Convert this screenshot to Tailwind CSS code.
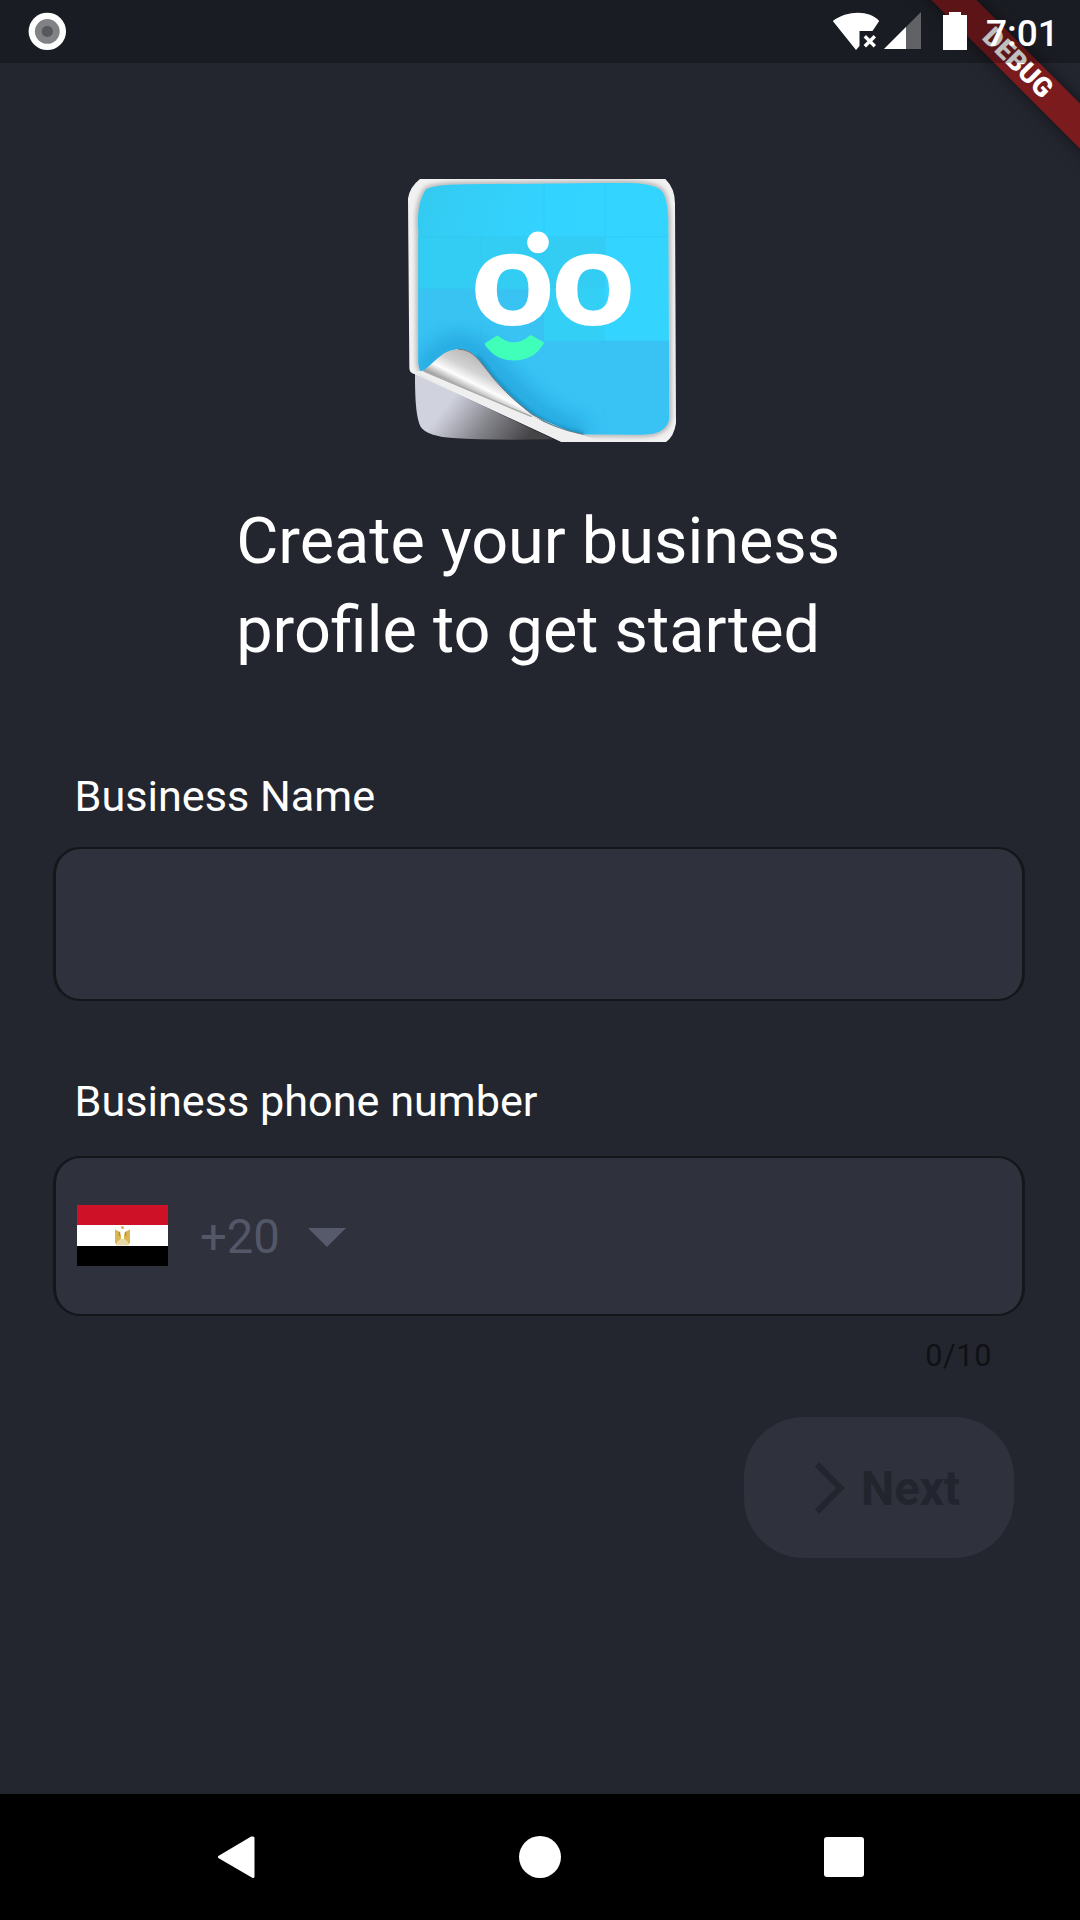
<!DOCTYPE html>
<html lang="en">
<head>
<meta charset="utf-8">
<title>Create your business profile</title>
<script src="https://cdn.jsdelivr.net/npm/@tailwindcss/browser@4"></script>
</head>
<body class="bg-[#23262f]">
<div class="relative flex h-[1920px] w-[1080px] flex-col overflow-hidden bg-[#23262f] font-['Roboto',sans-serif] text-white">

  <!-- Debug ribbon, painted under the translucent status bar -->
  <div class="absolute top-0 right-0 h-[260px] w-[280px] overflow-hidden">
    <div class="absolute top-[46.500px] left-[16.800px] flex h-[31.5px] w-[400px] rotate-45 items-center justify-center bg-[#7b1b1e] text-[27px] leading-none font-black shadow-[0_0_16px_rgba(0,0,0,0.5)]"><span class="pl-[1px]">DEBUG</span></div>
  </div>

  <!-- Status bar -->
  <header class="relative flex h-[63px] shrink-0 items-start bg-black/25">
    <svg class="mt-[12px] ml-[28px] size-[39px]" viewBox="0 0 39 39">
      <circle cx="19.3" cy="19.4" r="18.7" fill="#fff"/>
      <circle cx="19.3" cy="19.4" r="12.4" fill="#808285"/>
      <circle cx="19.3" cy="19.4" r="5.6" fill="#56585c"/>
    </svg>
    <svg class="ml-[758px] h-[63px] w-[153px]" viewBox="0 0 153 63">
      <path d="M7.800 21C22 10 45 10 54.200 21L47.500 31H34.500V46L31 50Z" fill="#fff"/>
      <path d="M39.800 36.300L49.800 46.300M49.800 36.300L39.800 46.300" stroke="#fff" stroke-width="3.400"/>
      <path d="M96 12V49H59Z" fill="#606266"/>
      <path d="M81 27V49H59Z" fill="#fff"/>
      <path d="M124 12H136V15H142V50H118V15H124Z" fill="#fff"/>
    </svg>
    <span class="mt-[12px] ml-[8px] text-[37px] leading-[43px] font-medium">7:01</span>
  </header>

  <main class="relative flex grow flex-col items-start">
    <svg class="mt-[97px] ml-[390px] size-[300px]" viewBox="0 0 900 900">
      <defs>
        <linearGradient id="sky" x1="0" y1="0" x2="1" y2="0.2"><stop offset="0" stop-color="#34caf0"/><stop offset="0.5" stop-color="#33d3ff"/><stop offset="1" stop-color="#33d5ff"/></linearGradient>
        <linearGradient id="under" gradientUnits="userSpaceOnUse" x1="150" y1="760" x2="350" y2="915"><stop offset="0" stop-color="#d0d3de"/><stop offset="0.12" stop-color="#c0c1cd"/><stop offset="0.5" stop-color="#85858c"/><stop offset="1" stop-color="#454548"/></linearGradient>
        <linearGradient id="curl" gradientUnits="userSpaceOnUse" x1="265" y1="580" x2="205" y2="700"><stop offset="0" stop-color="#b5b5b5"/><stop offset="0.4" stop-color="#d2d2d2"/><stop offset="0.65" stop-color="#fdfdfd"/><stop offset="0.85" stop-color="#a8a8a8"/><stop offset="1" stop-color="#888"/></linearGradient>
        <clipPath id="face"><path d="M105 92Q115 74 230 73L700 68Q790 68 815 92Q833 115 835 180L838 770Q836 822 755 824L570 823C460 805 400 750 310 655C270 605 250 568 200 568C165 572 130 615 95 635Q86 632 85 600V215Q78 135 105 92Z"/></clipPath>
        <filter id="soft" x="-20%" y="-20%" width="140%" height="140%"><feGaussianBlur stdDeviation="7"/></filter>
        <filter id="softer" x="-30%" y="-30%" width="160%" height="160%"><feGaussianBlur stdDeviation="28"/></filter>
        <clipPath id="sheet"><path d="M90 57H826Q855 85 855 130L858 790Q852 830 828 846H515L75 643Q59 640 58 625L54 115Q60 80 90 57Z"/></clipPath>
      </defs>
      <path d="M75 640L490 838Q300 842 190 834Q110 828 92 800Q74 770 75 640Z" fill="url(#under)"/>
      <g clip-path="url(#sheet)">
        <rect x="50" y="50" width="820" height="800" fill="#f1f1f1"/>
        <path d="M105 92Q115 74 230 73L700 68Q790 68 815 92Q833 115 835 180L838 770Q836 822 755 824L570 823L95 635Q86 632 85 600V215Q78 135 105 92Z" fill="none" stroke="#aaa" stroke-width="12" filter="url(#soft)"/>
      </g>
      <g clip-path="url(#face)">
        <rect x="70" y="60" width="780" height="780" fill="url(#sky)"/>
        <rect x="70" y="232" width="575" height="154" fill="#33ccf2"/>
        <rect x="462" y="386" width="182" height="156" fill="#33cff5"/>
        <rect x="70" y="386" width="392" height="160" fill="#38c3f3"/>
        <rect x="70" y="542" width="780" height="300" fill="#39c3f5"/>
        <path d="M273 232V542M462 70V232M645 70V386M645 542V830M85 230H835" stroke="#2fc3ef" stroke-width="2" fill="none" opacity="0.6"/>
        <path d="M85 650C120 600 150 560 200 555C270 555 300 610 340 650C410 720 470 790 590 815" fill="none" stroke="#1590cb" stroke-width="60" opacity="0.55" filter="url(#softer)"/>
        <path d="M260 590C290 625 300 645 320 665C400 750 460 805 580 823" fill="none" stroke="#1479a8" stroke-width="10" filter="url(#soft)"/>
      </g>
      <path d="M95 635C130 615 155 568 205 568C250 568 270 605 310 655C340 690 380 728 425 765L540 815Z" fill="url(#curl)"/>
      <path d="M205 568C250 568 270 605 310 655C370 725 460 805 580 823" fill="none" stroke="#777" stroke-width="3"/>
      <path d="M75 636L100 632L425 768Q500 808 570 823L640 846H515Z" fill="#efefef"/>
      <path d="M100 633L425 770" stroke="#a5a5a5" stroke-width="4"/>
      <circle cx="444" cy="247" r="32.500" fill="#fff"/>
      <text transform="translate(237 494) scale(1.104 1)" font-family="Open Sans" font-weight="700" font-size="384" letter-spacing="-19" fill="#fff">oo</text>
      <path d="M288 552L322 530Q371 572 422 529L458 549Q430 598 372 598Q318 598 288 552Z" fill="#40ffb8" stroke="#40ffb8" stroke-width="7" stroke-linejoin="round"/>
    </svg>

    <h1 class="mt-[37px] ml-[236.200px] text-[64.8px] leading-[89px] whitespace-nowrap">Create your business<br>profile to get started</h1>

    <label class="mt-[97px] ml-[74.500px] text-[43.2px] leading-[49px]">Business Name</label>
    <div class="mt-[26px] ml-[53px] h-[154px] w-[972px] rounded-[27px] border-x-3 border-y-2 border-[#14161a] bg-[#2f313c]"></div>

    <label class="mt-[76px] ml-[74.500px] text-[43.2px] leading-[49px]">Business phone number</label>
    <div class="mt-[30px] ml-[53px] flex h-[160px] w-[972px] items-center rounded-[27px] border-x-3 border-y-2 border-[#14161a] bg-[#2f313c] pb-[2px] pl-[21px]">
      <svg class="h-[61px] w-[91px]" viewBox="0 0 91 61">
        <rect width="91" height="61" fill="#fff"/>
        <rect width="91" height="20" fill="#ce1126"/>
        <rect y="41" width="91" height="20" fill="#000"/>
        <path d="M38 24.500L42.500 26.500L44 31L44 37L40 39.500L38 38ZM53 24.500L48.500 26.500L47 31V37L51 39.500L53 38Z" fill="#d9b651"/>
        <path d="M43.500 21.500H47L46.500 24H45Z" fill="#cfa93c"/>
        <path d="M40 37L43.500 34H47.500L51 37L52 40.500H39Z" fill="#ead9a8"/>
        <path d="M42.500 27V31M48.500 27V31" stroke="#b98a1e" stroke-width="1.400"/>
      </svg>
      <span class="relative top-[2px] ml-[32px] text-[47.250px] leading-[55px] text-[#535767]">+20</span>
      <svg class="relative top-[2px] ml-[28px] h-[19px] w-[38px]" viewBox="0 0 38 19"><path d="M0 0H38L19 19Z" fill="#565a6a"/></svg>
    </div>
    <div class="mt-[21px] mr-[88px] self-end text-[30.700px] leading-[37px] tracking-[0.600px] text-[#101115]">0/10</div>

    <button class="mt-[43px] mr-[66px] flex h-[141px] w-[270px] items-center self-end rounded-[60px] bg-[#2f313c] pl-[70px] text-[#22252e]">
      <svg class="h-[52px] w-[32px]" viewBox="0 0 32 52" fill="none" stroke="currentColor" stroke-width="6.200"><path d="M3 2.500L26.500 26L3 49.500"/></svg>
      <span class="mt-[3px] ml-[15px] text-[47.250px] leading-[55px] font-bold">Next</span>
    </button>
  </main>

  <!-- Navigation bar -->
  <nav class="flex h-[126px] shrink-0 items-center bg-black">
    <svg class="ml-[217px] h-[42px] w-[38px]" viewBox="0 0 38 42"><path d="M34.500 2L2.500 21L36 40.500V2Z" fill="#fff" stroke="#fff" stroke-width="3" stroke-linejoin="round"/></svg>
    <div class="ml-[264px] size-[42px] rounded-full bg-white"></div>
    <div class="ml-[263px] size-[40px] rounded-[3px] bg-white"></div>
  </nav>
</div>
</body>
</html>
